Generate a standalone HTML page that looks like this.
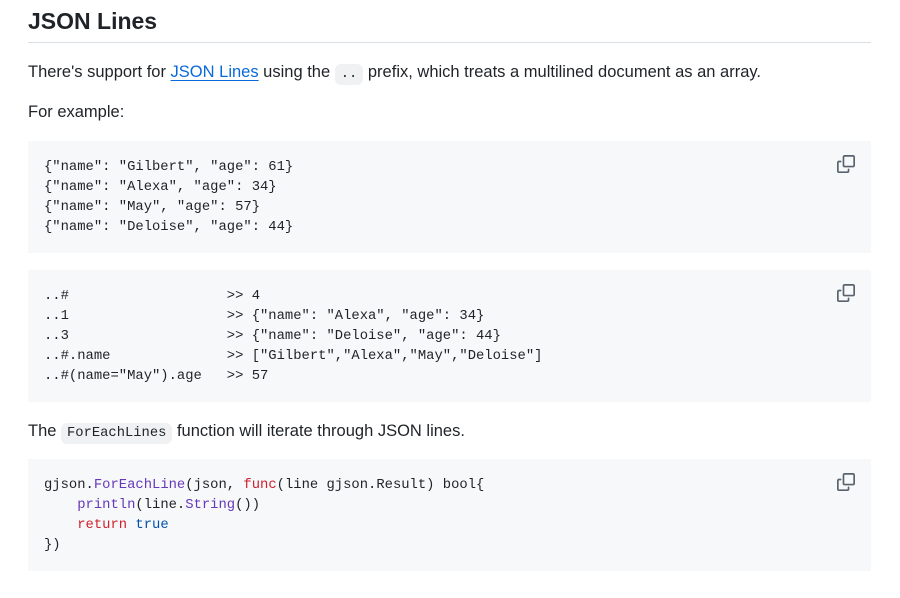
<!DOCTYPE html>
<html><head><meta charset="utf-8"><style>
body{margin:0;background:#fff;font-family:"Liberation Sans",sans-serif;color:#1f2328;}
h2{position:absolute;left:28px;top:5px;margin:0;font-size:23px;font-weight:bold;line-height:32px;}
.hr{position:absolute;left:28px;top:42px;width:843px;height:1px;background:#d8dee4;}
p{position:absolute;left:28px;margin:0;font-size:16.5px;line-height:24px;white-space:nowrap;}
a{color:#0969da;text-decoration:underline;text-underline-offset:3px;}
code{font-family:"Liberation Mono",monospace;font-size:13.8px;background:#eff1f3;border-radius:6px;padding:3px 6px;}
pre{position:absolute;left:28px;width:811px;margin:0;padding:16px;background:#f6f8fa;font-family:"Liberation Mono",monospace;font-size:13.85px;line-height:20px;color:#1f2328;}
.ic{position:absolute;right:16px;top:14px;}
.f{color:#6639ba}.k{color:#cf222e}.b{color:#0550ae}
</style></head><body>
<h2>JSON Lines</h2>
<div class="hr"></div>
<p style="top:60px">There's support for <a>JSON Lines</a> using the <code>..</code> prefix, which treats a multilined document as an array.</p>
<p style="top:100px">For example:</p>
<pre style="top:141px">{"name": "Gilbert", "age": 61}
{"name": "Alexa", "age": 34}
{"name": "May", "age": 57}
{"name": "Deloise", "age": 44}<svg class="ic" width="18" height="18" viewBox="0 0 16 16" fill="#59636e"><path d="M0 6.75C0 5.78.78 5 1.75 5h1.5a.75.75 0 0 1 0 1.5h-1.5a.25.25 0 0 0-.25.25v7.5c0 .14.11.25.25.25h7.5a.25.25 0 0 0 .25-.25v-1.5a.75.75 0 0 1 1.5 0v1.5A1.75 1.75 0 0 1 9.25 16h-7.5A1.75 1.75 0 0 1 0 14.25Z"/><path d="M5 1.75C5 .78 5.78 0 6.75 0h7.5C15.22 0 16 .78 16 1.75v7.5A1.75 1.75 0 0 1 14.25 11h-7.5A1.75 1.75 0 0 1 5 9.250Zm1.75-.25a.25.25 0 0 0-.25.25v7.5c0 .14.11.25.25.25h7.5a.25.25 0 0 0 .25-.25v-7.5a.25.25 0 0 0-.25-.25Z"/></svg></pre>
<pre style="top:270px">..#                   &gt;&gt; 4
..1                   &gt;&gt; {"name": "Alexa", "age": 34}
..3                   &gt;&gt; {"name": "Deloise", "age": 44}
..#.name              &gt;&gt; ["Gilbert","Alexa","May","Deloise"]
..#(name="May").age   &gt;&gt; 57<svg class="ic" width="18" height="18" viewBox="0 0 16 16" fill="#59636e"><path d="M0 6.75C0 5.78.78 5 1.75 5h1.5a.75.75 0 0 1 0 1.5h-1.5a.25.25 0 0 0-.25.25v7.5c0 .14.11.25.25.25h7.5a.25.25 0 0 0 .25-.25v-1.5a.75.75 0 0 1 1.5 0v1.5A1.75 1.75 0 0 1 9.25 16h-7.5A1.75 1.75 0 0 1 0 14.25Z"/><path d="M5 1.75C5 .78 5.78 0 6.75 0h7.5C15.22 0 16 .78 16 1.75v7.5A1.75 1.75 0 0 1 14.25 11h-7.5A1.75 1.75 0 0 1 5 9.25Zm1.75-.25a.25.25 0 0 0-.25.25v7.5c0 .14.11.25.25.25h7.5a.25.25 0 0 0 .25-.25v-7.5a.25.25 0 0 0-.25-.25Z"/></svg></pre>
<p style="top:419px">The <code>ForEachLines</code> function will iterate through JSON lines.</p>
<pre style="top:459px">gjson.<span class="f">ForEachLine</span>(json, <span class="k">func</span>(line gjson.Result) bool{
    <span class="f">println</span>(line.<span class="f">String</span>())
    <span class="k">return</span> <span class="b">true</span>
})<svg class="ic" width="18" height="18" viewBox="0 0 16 16" fill="#59636e"><path d="M0 6.75C0 5.78.78 5 1.75 5h1.5a.75.75 0 0 1 0 1.5h-1.5a.25.25 0 0 0-.25.25v7.5c0 .14.11.25.25.25h7.5a.25.25 0 0 0 .25-.25v-1.5a.75.75 0 0 1 1.5 0v1.5A1.75 1.75 0 0 1 9.25 16h-7.5A1.75 1.75 0 0 1 0 14.25Z"/><path d="M5 1.75C5 .78 5.78 0 6.75 0h7.5C15.22 0 16 .78 16 1.75v7.5A1.75 1.75 0 0 1 14.25 11h-7.5A1.75 1.75 0 0 1 5 9.25Zm1.75-.25a.25.25 0 0 0-.25.25v7.5c0 .14.11.25.25.25h7.5a.25.25 0 0 0 .25-.25v-7.5a.25.25 0 0 0-.25-.25Z"/></svg></pre>
</body></html>
